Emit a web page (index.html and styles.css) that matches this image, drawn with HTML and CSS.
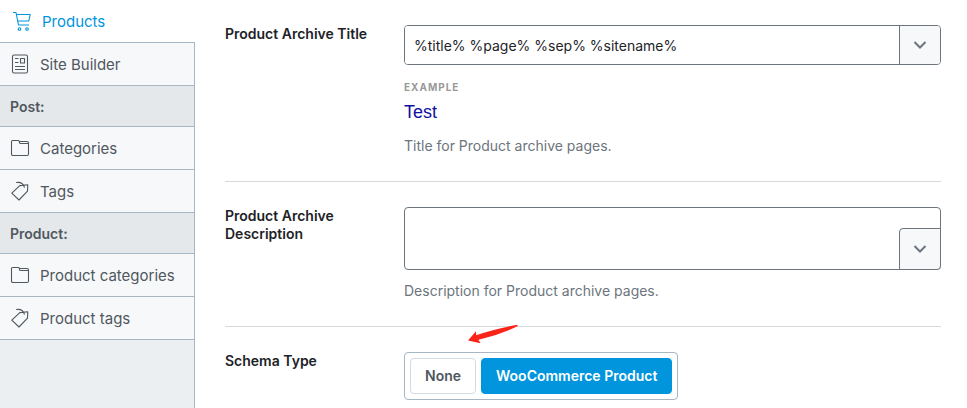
FILE: index.html
```html
<!DOCTYPE html>
<html lang="en">
<head>
<meta charset="utf-8">
<meta name="viewport" content="width=device-width, initial-scale=1">
<title>Titles &amp; Meta</title>
<link rel="stylesheet" href="styles.css">
</head>
<body>
<svg class="symbols" aria-hidden="true">
  <symbol id="folder" viewBox="0 0 20 20"><path d="M1.500 16V3.600Q1.500 2.500 2.600 2.500H8.500q.8 0 .8 1 0 2 1.200 2H18.500M8.800 3.500H17q1.500 0 1.500 1.500v11q0 1.500-1.400 1.500H2.900q-1.400 0-1.400-1.500"/></symbol>
  <symbol id="tag" viewBox="0 0 20 20"><path d="M1.800 12.200 9.800 4.600l8-.8-.3 6.400L9 19ZM6.200 1.500C10.500.8 13.600 3 14.500 6.500"/></symbol>
  <symbol id="chevron" viewBox="0 0 14 10"><path d="m1.500 2 5.500 5.500L12.500 2"/></symbol>
</svg>
<div class="layout">
  <nav class="sidebar" aria-label="Settings sections">
    <a class="tab tab-active" href="#products">
      <svg class="icon" viewBox="0 0 20 20" aria-hidden="true"><path d="M1 1.500h3L6.500 14h10.500M4.400 3.500h13.800L16.800 10H5.600"/><circle cx="7.500" cy="18" r="1.300"/><circle cx="15" cy="18" r="1.300"/></svg>
      Products
    </a>
    <a class="tab" href="#builder">
      <svg class="icon" viewBox="0 0 20 20" aria-hidden="true"><rect x="2.500" y="1" width="15" height="18" rx="1.500"/><path d="M10.500 4.500h4v4.500h-4ZM5 4.500h3.500M5 8.500h3.500M5 12.500h10M5 15.500h10"/></svg>
      Site Builder
    </a>
    <h2 class="group-title">Post:</h2>
    <a class="tab" href="#categories"><svg class="icon" aria-hidden="true"><use href="#folder"/></svg>Categories</a>
    <a class="tab" href="#tags"><svg class="icon" aria-hidden="true"><use href="#tag"/></svg>Tags</a>
    <h2 class="group-title">Product:</h2>
    <a class="tab" href="#product-categories"><svg class="icon" aria-hidden="true"><use href="#folder"/></svg>Product categories</a>
    <a class="tab" href="#product-tags"><svg class="icon" aria-hidden="true"><use href="#tag"/></svg>Product tags</a>
    <div class="sidebar-rest"></div>
  </nav>
  <main class="settings">
    <section class="field">
      <label class="field-label" for="title">Product Archive Title</label>
      <div>
        <div class="combo">
          <input class="combo-input" id="title" type="text" value="%title% %page% %sep% %sitename%">
          <button class="combo-button" type="button" aria-label="Insert title variable"><svg class="chevron" aria-hidden="true"><use href="#chevron"/></svg></button>
        </div>
        <div class="example">
          <div class="example-heading">EXAMPLE</div>
          <div class="example-title">Test</div>
        </div>
        <p class="hint">Title for Product archive pages.</p>
      </div>
    </section>
    <section class="field">
      <label class="field-label" for="description">Product Archive Description</label>
      <div>
        <div class="area">
          <textarea class="area-input" id="description"></textarea>
          <button class="area-button" type="button" aria-label="Insert description variable"><svg class="chevron" aria-hidden="true"><use href="#chevron"/></svg></button>
        </div>
        <p class="hint">Description for Product archive pages.</p>
      </div>
    </section>
    <section class="field">
      <div class="field-label" id="schema">Schema Type</div>
      <div class="schema">
        <div class="choices" role="group" aria-labelledby="schema">
          <button class="choice" type="button" aria-pressed="false">None</button>
          <button class="choice choice-active" type="button" aria-pressed="true">WooCommerce Product</button>
        </div>
        <svg class="pointer" viewBox="0 0 52 22" aria-hidden="true"><path d="M1 16.500 9 7.300l.2 3.900Q27 5 49 1q3-.5 1 1.500Q32 11 11.500 15.800l2 3.500Z"/></svg>
      </div>
    </section>
  </main>
</div>
</body>
</html>
```

FILE: styles.css
```css
* {
  box-sizing: border-box;
}

body {
  margin: 0;
  background: #fff;
  color: #1d2327;
  font: 14px/18px Inter, "Liberation Sans", sans-serif;
}

button,
input,
textarea {
  font: inherit;
  color: inherit;
  margin: 0;
}

.symbols {
  position: absolute;
  width: 0;
  height: 0;
}

.layout {
  display: grid;
  grid-template-columns: 195px 1fr;
  min-height: 100vh;
}

.sidebar {
  display: flex;
  flex-direction: column;
}

.tab,
.group-title {
  display: flex;
  align-items: center;
  margin: 0;
  padding: 2px 10px 0;
  border: solid #a7b7c4;
  border-width: 0 1px 1px 0;
  color: #50575e;
}

.tab {
  gap: 10px;
  height: 43px;
  background: #f7f8fa;
  font-size: 15px;
  text-decoration: none;
}

.tab-active {
  padding-left: 12px;
  border-right: 0;
  background: #fff;
  color: #0095dd;
}

.group-title {
  height: 41px;
  background: #e4e8eb;
  font-size: 14px;
  font-weight: 600;
}

.sidebar-rest {
  flex: 1;
  border-right: 1px solid #a7b7c4;
  background: #ebeff2;
}

.icon {
  width: 20px;
  height: 20px;
  margin-bottom: 2px;
  fill: none;
  stroke: currentColor;
  stroke-width: 1.1;
  stroke-linejoin: round;
}

.settings {
  padding: 0 26px 0 30px;
}

.field {
  display: grid;
  grid-template-columns: 149px 1fr;
  column-gap: 30px;
  padding: 25px 0 26px;
  border-bottom: 1px solid #d5d8dc;
}

.field:last-child {
  padding-bottom: 0;
  border-bottom: 0;
}

.field-label {
  font-weight: 600;
}

.combo {
  display: flex;
  height: 40px;
  border: 1px solid #6c757d;
  border-radius: 4px;
  overflow: hidden;
}

.combo-input {
  flex: 1;
  min-width: 0;
  padding: 2px 9px 0;
  border: 0;
  background: #fff;
}

.combo-button {
  width: 41px;
  padding: 0;
  border: 0;
  border-left: 1px solid #6c757d;
  background: #f7f8fa;
}

.chevron {
  display: block;
  width: 14px;
  height: 10px;
  margin: 0 auto;
  fill: none;
  stroke: #6c757d;
  stroke-width: 2;
}

.example {
  padding-top: 16px;
}

.example-heading {
  color: #999;
  font-size: 10px;
  font-weight: 700;
  line-height: 12px;
  letter-spacing: 1px;
}

.example-title {
  padding-top: 8px;
  color: #1210a0;
  font-family: "Liberation Sans", Arial, sans-serif;
  font-size: 18px;
  line-height: 22px;
}

.hint {
  margin: 12px 0 0;
  color: #6c757d;
}

.example + .hint {
  margin-top: 14px;
}

.area {
  position: relative;
}

.area-input {
  display: block;
  width: 100%;
  height: 63px;
  padding: 10px;
  border: 1px solid #6c757d;
  border-radius: 4px;
  background: #fff;
  resize: none;
}

.area-button {
  position: absolute;
  right: 0;
  bottom: 0;
  width: 42px;
  height: 42px;
  padding: 0;
  border: 1px solid #6c757d;
  border-radius: 4px 0;
  background: #f7f8fa;
}

.schema {
  position: relative;
}

.choices {
  display: inline-flex;
  gap: 5px;
  padding: 5px;
  border: 1px solid #a7b7c4;
  border-radius: 4px;
}

.choice {
  height: 36px;
  padding: 0 14px;
  border: 1px solid #d5d8e0;
  border-radius: 4px;
  background: #fff;
  color: #50575e;
  font-weight: 600;
}

.choice-active {
  border-color: #0095dd;
  background: #0095dd;
  color: #fff;
}

.pointer {
  position: absolute;
  left: 63px;
  top: -28px;
  width: 52px;
  height: 22px;
  fill: #fb2418;
}
```
